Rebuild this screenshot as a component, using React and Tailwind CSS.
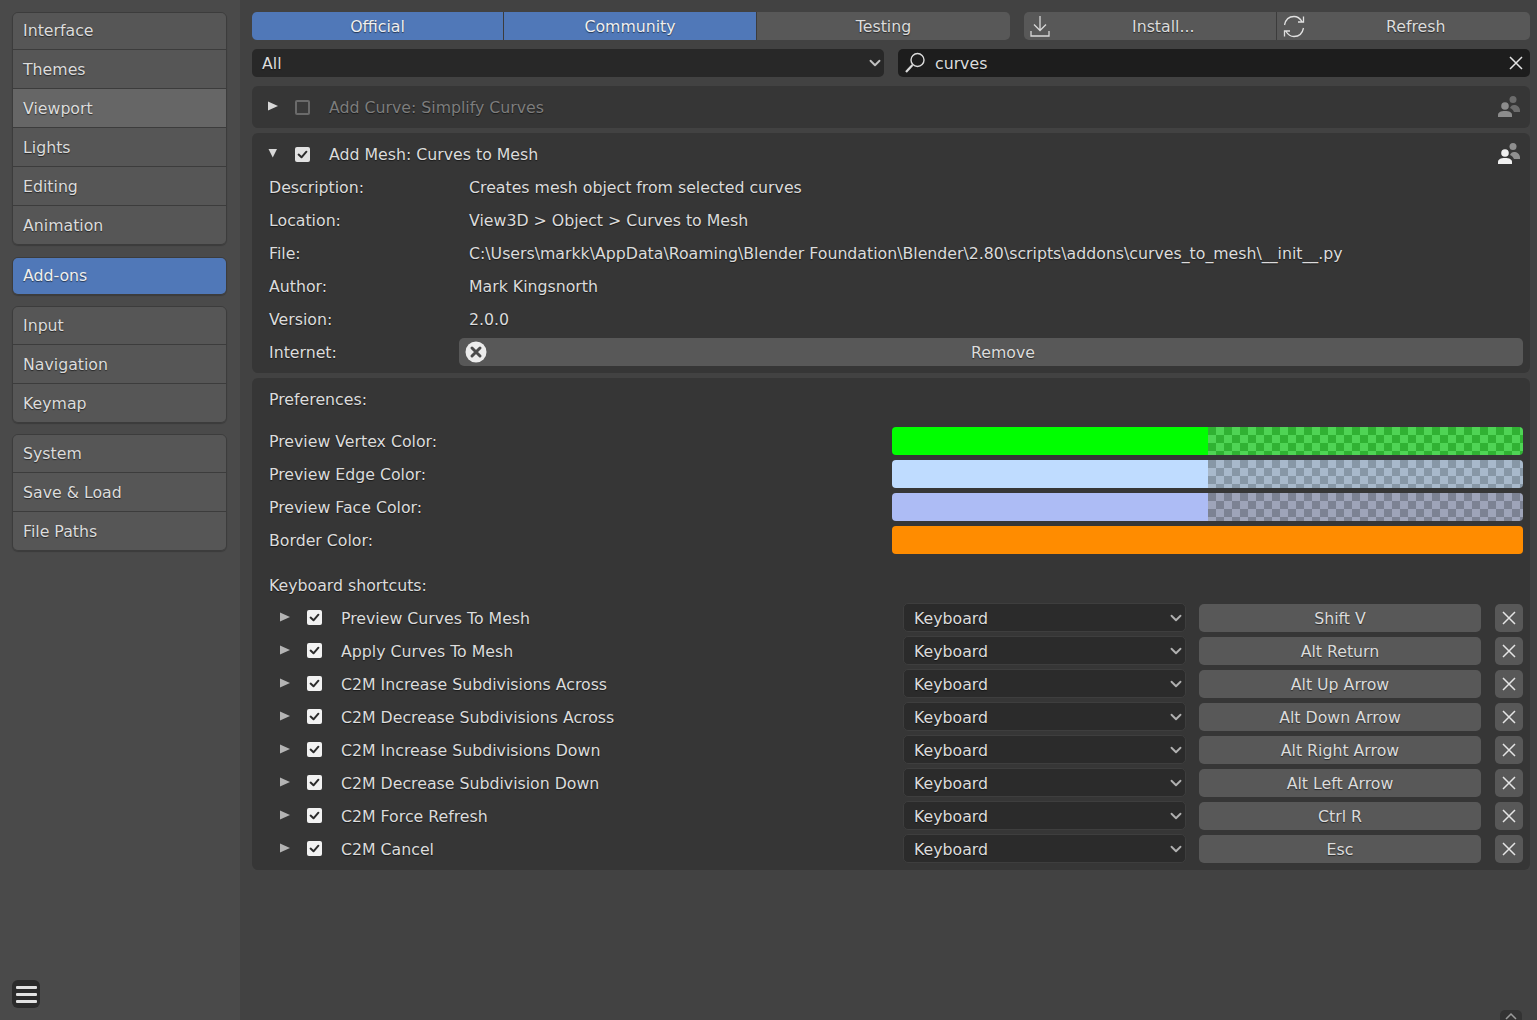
import { ChevronDown } from "lucide-react";

const navGroups = [
	["Interface", "Themes", "Viewport", "Lights", "Editing", "Animation"],
	["Add-ons"],
	["Input", "Navigation", "Keymap"],
	["System", "Save & Load", "File Paths"],
];

const details = [
	["Description:", "Creates mesh object from selected curves"],
	["Location:", "View3D > Object > Curves to Mesh"],
	["File:", "C:\\Users\\markk\\AppData\\Roaming\\Blender Foundation\\Blender\\2.80\\scripts\\addons\\curves_to_mesh\\__init__.py"],
	["Author:", "Mark Kingsnorth"],
	["Version:", "2.0.0"],
];

const shortcuts = [
	["Preview Curves To Mesh", "Shift V"],
	["Apply Curves To Mesh", "Alt Return"],
	["C2M Increase Subdivisions Across", "Alt Up Arrow"],
	["C2M Decrease Subdivisions Across", "Alt Down Arrow"],
	["C2M Increase Subdivisions Down", "Alt Right Arrow"],
	["C2M Decrease Subdivision Down", "Alt Left Arrow"],
	["C2M Force Refresh", "Ctrl R"],
	["C2M Cancel", "Esc"],
];

const shadow = "[text-shadow:0_1px_1px_rgba(0,0,0,0.55)]";

function Triangle({ open, className = "" }) {
	return (
		<svg width="10" height="10" viewBox="0 0 10 10" className={className}>
			{open ? <path d="M.5 1h8.500L4.750 9.500z" fill="currentColor" /> : <path d="M0 .5l10 4.500-10 4.500z" fill="currentColor" />}
		</svg>
	);
}

function Check({ on, light }) {
	if (!on) {
		return <div className="h-[15px] w-[15px] rounded-[2px] border-2 border-[#6a6a6a] bg-[#3a3a3a]" />;
	}
	return (
		<div className={`flex h-[15px] w-[15px] items-center justify-center rounded-[2px] ${light ? "bg-[#f2f2f2]" : "bg-[#e2e2e2]"}`}>
			<svg width="13" height="13" viewBox="0 0 13 13" fill="none">
				<path d="M2.600 6.600l2.900 2.700 4.900-5.600" stroke="#2c2c2c" strokeWidth="2" strokeLinecap="round" strokeLinejoin="round" />
			</svg>
		</div>
	);
}

function Users({ dim }) {
	const front = dim ? "#8c8c8c" : "#f0f0f0";
	const back = dim ? "#6c6c6c" : "#8f8f8f";
	return (
		<svg width="22" height="22" viewBox="0 0 22 22" fill="none">
			<circle cx="15" cy="3.500" r="3.500" fill={back} />
			<path d="M12 12c.8-2 2-3 4-3 3 0 6 2 6 5.500V16h-6c-.5-1.500-2-3-4-4z" fill={back} />
			<circle cx="7" cy="10" r="3.800" fill={front} />
			<path d="M0 21v-2c0-2.500 2.500-4 7-4s7 1.500 7 4v2z" fill={front} />
		</svg>
	);
}

function CloseX({ size = 14 }) {
	return (
		<svg width={size} height={size} viewBox="0 0 14 14" fill="none" stroke="#e4e4e4" strokeWidth="1.500">
			<path d="M1 1l12 12M13 1L1 13" />
		</svg>
	);
}

function Swatch({ label, solid, checker }) {
	return (
		<div className="flex h-[33px] items-center">
			<span className="w-[623px] shrink-0 pt-[2px]">{label}</span>
			<div className="flex h-[28px] flex-1 overflow-hidden rounded-[4px]">
				<div className={`flex-1 ${solid}`} />
				{checker && <div className={`flex-1 bg-[length:16px_16px] ${checker}`} />}
			</div>
		</div>
	);
}

function ShortcutRow({ name, keyName }) {
	return (
		<div className="flex h-[33px] items-center">
			<div className="flex w-[55px] shrink-0 items-center pl-[11px] text-[#b4b4b4]">
				<Triangle className="-mt-[2px]" />
				<div className="ml-[17px]"><Check on light /></div>
			</div>
			<span className="ml-[17px] w-[562px] shrink-0 pt-[2px]">{name}</span>
			<div className="flex h-[29px] w-[283px] shrink-0 items-center justify-between rounded-[5px] border border-[#3e3e3e] bg-[#2b2b2b] pl-[10px]">
				<span className="pt-[2px]">Keyboard</span>
				<ChevronDown size={18} strokeWidth={2.500} className="text-[#b0b0b0]" />
			</div>
			<div className="ml-[13px] flex h-[28px] w-[282px] shrink-0 items-center justify-center rounded-[5px] bg-[#585858] pt-[2px]">{keyName}</div>
			<div className="ml-[14px] flex h-[28px] w-[28px] shrink-0 items-center justify-center rounded-[5px] bg-[#585858]">
				<CloseX />
			</div>
		</div>
	);
}

function Sidebar() {
	return (
		<aside className="flex h-[1020px] w-[240px] shrink-0 flex-col bg-[#4a4a4a] pb-[12px] pl-[12px] pr-[13px] pt-[12px]">
			<div className="flex flex-col gap-[11px]">
				{navGroups.map((group, g) => (
					<div key={group[0]} className={`overflow-hidden rounded-[6px] border border-[#3c3c3c] shadow-[0_1px_1px_rgba(0,0,0,0.2)] ${g === 0 ? "mb-[1px]" : ""}`}>
						{group.map((item, i) => (
							<div
								key={item}
								className={`flex items-center px-[10px] ${i > 0 ? "h-[39px] border-t border-[#3c3c3c] pt-[2px]" : group.length === 3 ? "h-[37px]" : "h-[36px]"} ${
									item === "Add-ons" ? "bg-[#5078b8] text-[#f0f0f0]" : item === "Viewport" ? "bg-[#666666]" : "bg-[#565656]"
								}`}
							>
								{item}
							</div>
						))}
					</div>
				))}
			</div>
			<div className="mt-auto flex h-[28px] w-[28px] flex-col items-center justify-center gap-[4px] rounded-[6px] bg-[#2b2b2b]">
				<div className="h-[3px] w-[21px] rounded-[1px] bg-[#e2e2e2]" />
				<div className="h-[3px] w-[21px] rounded-[1px] bg-[#e2e2e2]" />
				<div className="h-[3px] w-[21px] rounded-[1px] bg-[#e2e2e2]" />
			</div>
		</aside>
	);
}

function Toolbar() {
	return (
		<div className="flex h-[28px] gap-[14px]">
			<div className="flex w-[758px] overflow-hidden rounded-[5px]">
				<div className="flex w-[251px] items-center justify-center bg-[#5078b8] pt-[2px] text-[#f0f0f0]">Official</div>
				<div className="flex w-[253px] items-center justify-center border-l border-[#3c3c3c] bg-[#5078b8] pt-[2px] text-[#f0f0f0]">Community</div>
				<div className="flex flex-1 items-center justify-center border-l border-[#3c3c3c] bg-[#585858] pt-[2px]">Testing</div>
			</div>
			<div className="flex flex-1 overflow-hidden rounded-[5px] bg-[#585858]">
				<div className="flex w-[252px] items-center pl-[6px]">
					<svg width="20" height="22" viewBox="0 0 20 22" fill="none" stroke="#d8d8d8" strokeWidth="1.300">
						<path d="M10 1v14M4 9.500l6 6 6-6M1 16v5h18v-5" />
					</svg>
					<span className="ml-[82px] pt-[2px]">Install...</span>
				</div>
				<div className="flex flex-1 items-center border-l border-[#3c3c3c] pl-[6px]">
					<svg width="22" height="23" viewBox="0 0 22 23" fill="none" stroke="#e0e0e0" strokeWidth="1.300">
						<path d="M1.500 10C2.500 5 6 1.500 11 1.500c3.500 0 6 1.800 8 5M20.500 1.500v5.500H15M20.500 13c-1 5-4.500 8.500-9.500 8.500-3.500 0-6-1.800-8-5M1.500 21.500V16H7" />
					</svg>
					<span className="ml-[81px] pt-[2px]">Refresh</span>
				</div>
			</div>
		</div>
	);
}

function Filters() {
	return (
		<div className="mt-[9px] flex h-[28px] gap-[14px]">
			<div className="flex w-[632px] items-center justify-between rounded-[5px] bg-[#282828] pl-[10px]">
				<span className="pt-[2px]">All</span>
				<ChevronDown size={18} strokeWidth={2.500} className="text-[#c0c0c0]" />
			</div>
			<div className="flex flex-1 items-center rounded-[5px] bg-[#1d1d1d] pl-[6px] pr-[7px]">
				<svg width="22" height="22" viewBox="0 0 22 22" fill="none" stroke="#dcdcdc" strokeWidth="1.400">
					<circle cx="13.500" cy="8" r="6.500" />
					<path d="M8.500 13L2 20" strokeWidth="2.200" />
				</svg>
				<span className="ml-[9px] pt-[2px]">curves</span>
				<div className="ml-auto"><CloseX /></div>
			</div>
		</div>
	);
}

function AddonHeader({ title, open }) {
	return (
		<div className="flex h-[42px] items-center pl-[16px] pr-[10px]">
			<Triangle open={open} className="-mt-[2px] text-[#d8d8d8]" />
			<div className="ml-[17px]"><Check on={open} /></div>
			<span className={`ml-[19px] pt-[2px] ${open ? "" : "text-[#7d7d7d]"}`}>{title}</span>
			<div className="ml-auto"><Users dim={!open} /></div>
		</div>
	);
}

export default function App() {
	return (
		<div className={`relative flex h-[1020px] w-[1537px] overflow-hidden bg-[#424242] font-['DejaVu_Sans',sans-serif] text-[15.750px] text-[#dcdcdc] ${shadow}`}>
			<Sidebar />
			<main className="flex w-[1278px] flex-col pl-[12px] pt-[12px]" style={{ boxSizing: "content-box" }}>
				<Toolbar />
				<Filters />

				<section className="mt-[9px] rounded-[6px] bg-[#363636]">
					<AddonHeader title="Add Curve: Simplify Curves" />
				</section>

				<section className="mt-[5px] h-[240px] rounded-[6px] bg-[#363636]">
					<AddonHeader title="Add Mesh: Curves to Mesh" open />
					<div className="-mt-[4px] pl-[17px] pr-[7px]">
						{details.map(([k, v]) => (
							<div key={k} className="flex h-[33px] items-center pt-[1px]">
								<span className="w-[200px] shrink-0">{k}</span>
								<span>{v}</span>
							</div>
						))}
						<div className="flex h-[33px] items-center">
							<span className="w-[190px] shrink-0 pt-[1px]">Internet:</span>
							<div className="relative -mt-[1px] flex h-[28px] flex-1 items-center justify-center rounded-[5px] bg-[#585858] pl-[24px] pt-[2px]">
								<svg width="22" height="22" viewBox="0 0 22 22" className="absolute left-[6px] top-[3px]">
									<circle cx="11" cy="11" r="10.500" fill="#ececec" />
									<path d="M7 7l8 8M15 7l-8 8" stroke="#4c4c4c" strokeWidth="3" strokeLinecap="round" />
								</svg>
								Remove
							</div>
						</div>
					</div>
				</section>

				<section className="mt-[5px] h-[492px] rounded-[6px] bg-[#363636] pl-[17px] pr-[7px]">
					<div className="flex h-[42px] items-center pt-[2px]">Preferences:</div>
					<div className="mt-[4px]">
						<Swatch label="Preview Vertex Color:" solid="bg-[#00ff00]" checker="bg-[conic-gradient(#4fd455_25%,#30b233_0_50%,#4fd455_0_75%,#30b233_0)]" />
						<Swatch label="Preview Edge Color:" solid="bg-[#bfdcff]" checker="bg-[conic-gradient(#a8b9cb_25%,#8797a6_0_50%,#a8b9cb_0_75%,#8797a6_0)]" />
						<Swatch label="Preview Face Color:" solid="bg-[#adbcf5]" checker="bg-[conic-gradient(#9ea4b9_25%,#7c8293_0_50%,#9ea4b9_0_75%,#7c8293_0)]" />
						<Swatch label="Border Color:" solid="bg-[#ff8c00]" />
					</div>
					<div className="mt-[12px] flex h-[33px] items-center pt-[2px]">Keyboard shortcuts:</div>
					{shortcuts.map(([name, keyName]) => (
						<ShortcutRow key={name} name={name} keyName={keyName} />
					))}
				</section>
			</main>
			<div className="absolute bottom-0 left-[1500px] flex h-[10px] w-[22px] items-start justify-center rounded-t-[5px] bg-[#333333] pt-[2px]">
				<svg width="12" height="8" viewBox="0 0 12 8" fill="none" stroke="#9a9a9a" strokeWidth="1.500">
					<path d="M1 7l5-5 5 5" />
				</svg>
			</div>
		</div>
	);
}
